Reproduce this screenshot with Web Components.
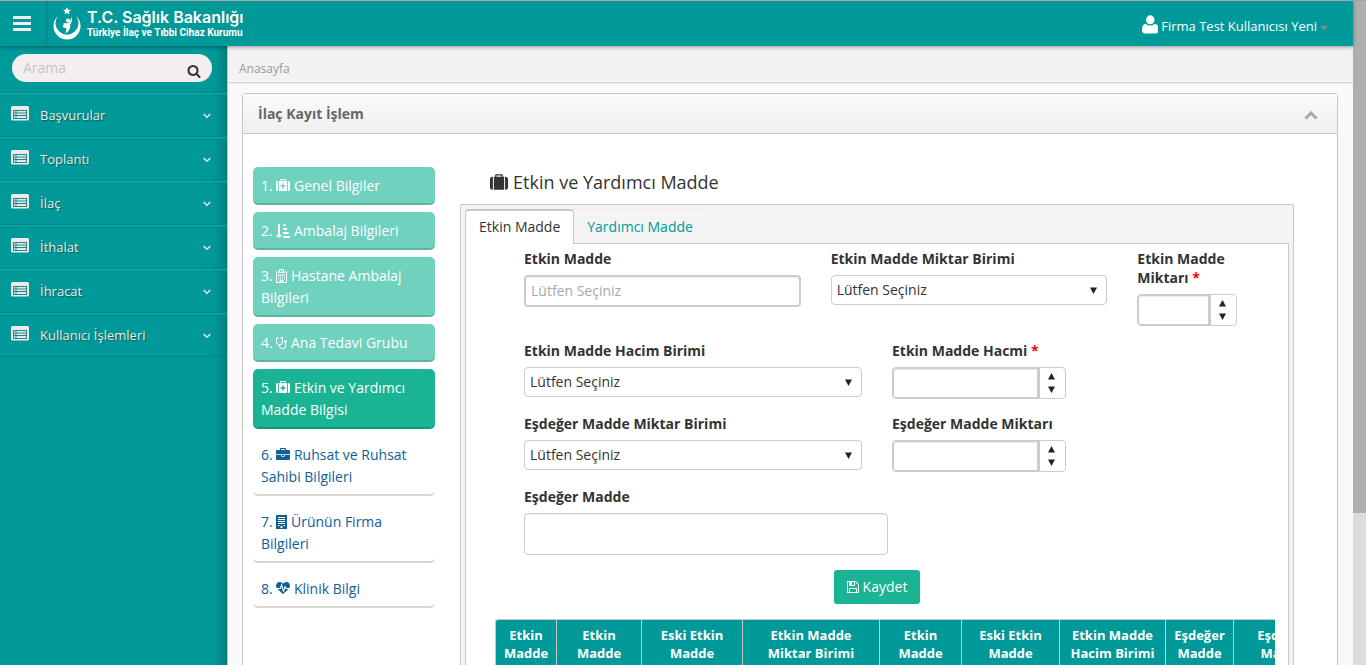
<!DOCTYPE html>
<html lang="tr">
<head>
<meta charset="utf-8">
<title>İlaç Kayıt İşlem</title>
<style>
html, body { margin: 0; height: 100%; overflow: hidden; }
body { font: 14px/22px "Open Sans", sans-serif; color: #333; background: #f9f9f9; }
</style>
</head>
<body>
<app-shell>
  <app-header slot="header"></app-header>
  <app-sidebar slot="side">
    <side-item>Başvurular</side-item>
    <side-item>Toplantı</side-item>
    <side-item>İlaç</side-item>
    <side-item>İthalat</side-item>
    <side-item>İhracat</side-item>
    <side-item>Kullanıcı İşlemleri</side-item>
  </app-sidebar>
  <bread-crumb>Anasayfa</bread-crumb>
  <panel-box>
    <span slot="title">İlaç Kayıt İşlem</span>
    <step-list slot="steps">
      <wizard-step state="done" no="1" icon="medkit">Genel Bilgiler</wizard-step>
      <wizard-step state="done" no="2" icon="sort">Ambalaj Bilgileri</wizard-step>
      <wizard-step state="done" no="3" icon="hospital">Hastane Ambalaj Bilgileri</wizard-step>
      <wizard-step state="done" no="4" icon="stethoscope">Ana Tedavi Grubu</wizard-step>
      <wizard-step state="active" no="5" icon="medkit">Etkin ve Yardımcı Madde Bilgisi</wizard-step>
      <wizard-step no="6" icon="briefcase">Ruhsat ve Ruhsat Sahibi Bilgileri</wizard-step>
      <wizard-step no="7" icon="building">Ürünün Firma Bilgileri</wizard-step>
      <wizard-step no="8" icon="heartbeat">Klinik Bilgi</wizard-step>
    </step-list>
    <section-title>Etkin ve Yardımcı Madde</section-title>
    <tab-box>
      <form-grid>
        <form-field style="grid-column: span 5" type="text" label="Etkin Madde" placeholder="Lütfen Seçiniz"></form-field>
        <form-field style="grid-column: span 5" type="select" label="Etkin Madde Miktar Birimi"></form-field>
        <form-field style="grid-column: span 2" type="number" label="Etkin Madde Miktarı" required></form-field>
        <form-field style="grid-column: span 6" type="select" label="Etkin Madde Hacim Birimi"></form-field>
        <form-field style="grid-column: span 6" type="number" label="Etkin Madde Hacmi" required size="wide"></form-field>
        <form-field style="grid-column: span 6" type="select" label="Eşdeğer Madde Miktar Birimi"></form-field>
        <form-field style="grid-column: span 6" type="number" label="Eşdeğer Madde Miktarı" size="wide"></form-field>
        <form-field style="grid-column: span 12" type="area" label="Eşdeğer Madde"></form-field>
        <save-button style="grid-column: span 12">Kaydet</save-button>
      </form-grid>
      <data-grid></data-grid>
    </tab-box>
  </panel-box>
</app-shell>

<script>
const ICONS = {
  medkit: [0, 1792, "M800 576h192v224h224v192h-224v224h-192v-224h-224v-192h224zM640 256h512v-128h-512zM272 256v1280h-48q-92 0-158-66t-66-158v-832q0-92 66-158t158-66zM1408 256v1280h-1024v-1280h128v-160q0-40 28-68t68-28h576q40 0 68 28t28 68v160zM1792 480v832q0 92-66 158t-158 66h-48v-1280h48q92 0 158 66t66 158z"],
  suitcase: [0, 1792, "M640 384h512v-128h-512zM288 384v1280h-64q-92 0-158-66t-66-158v-832q0-92 66-158t158-66zM1408 384v1280h-1024v-1280h128v-160q0-40 28-68t68-28h576q40 0 68 28t28 68v160zM1792 608v832q0 92-66 158t-158 66h-64v-1280h64q92 0 158 66t66 158z"],
  sort: [0, 1792, "M736 1440q0 12-10 24l-319 319q-10 9-23 9-12 0-23-9l-320-320q-15-16-7-35 8-20 30-20h192v-1376q0-14 9-23t23-9h192q14 0 23 9t9 23v1376h192q14 0 23 9t9 23zM896 0h320v256h-320zM896 512h512v256h-512zM896 1024h704v256h-704zM896 1536h896v256h-896z"],
  hospital: [192, 1408, "M448 1216h128v128h-128zM448 960h128v128h-128zM704 960h128v128h-128zM960 960h128v128h-128zM1216 960h128v128h-128zM1216 1216h128v128h-128zM960 1216h128v128h-128zM704 1216h128v128h-128zM448 704h896v128h-896zM192 320h384v-256q0-64 64-64h512q64 0 64 64v256h384v1472h-1408zM320 448v1216h320v-224h512v224h320v-1216h-256v64h-640v-64zM704 128v256h128v-96h128v96h128v-256h-128v80h-128v-80z"],
  stethoscope: [192, 1408, "M1472 704q0-26-19-45t-45-19-45 19-19 45 19 45 45 19 45-19 19-45zm128 0q0 61-35.5 111t-92.5 70v395q0 159-131.5 271.5t-316.5 112.5-316.5-112.5-131.5-271.5v-132q-164-20-274-128t-110-252v-512q0-26 19-45t45-19q6 0 16 2 17-30 47-48t65-18q53 0 90.5 37.5t37.5 90.5-37.5 90.5-90.5 37.5q-33 0-64-18v402q0 106 94 181t226 75 226-75 94-181v-402q-31 18-64 18-53 0-90.5-37.5t-37.5-90.5 37.5-90.5 90.5-37.5q35 0 65 18t47 48q10-2 16-2 26 0 45 19t19 45v512q0 144-110 252t-274 128v132q0 106 94 181t226 75 226-75 94-181v-395q-57-20-92.5-70t-35.5-111q0-80 56-136t136-56 136 56 56 136z"],
  briefcase: [0, 1792, "M640 256h512v-128h-512v128zm1152 640v480q0 66-47 113t-113 47h-1472q-66 0-113-47t-47-113v-480h672v160q0 26 19 45t45 19h320q26 0 45-19t19-45v-160h672zm-768 0v128h-256v-128h256zm768-480v384h-1792v-384q0-66 47-113t113-47h352v-160q0-40 28-68t68-28h576q40 0 68 28t28 68v160h352q66 0 113 47t47 113z"],
  building: [192, 1408, "M192 0h1408v1792h-1408zM448 256v112h896v-112zM448 512v112h896v-112zM448 768v112h896v-112zM448 1024v112h896v-112zM448 1280v112h192v-112zM1152 1280v112h192v-112zM768 1408v256h256v-256z"],
  heartbeat: [0, 1792, "M1280 896h305q-5 6-10 10.500t-9 7.500l-3 4-623 600q-18 18-44 18t-44-18l-624-602q-5-2-21-20h369q22 0 39.500-13.500t22.500-34.500l70-281 190 667q6 20 23 33t39 13q21 0 38-13t23-33l146-485 56 112q18 35 57 35zm512-428q0 145-103 300h-369l-111-221q-8-17-25.500-27t-36.500-8q-45 5-56 46l-129 430-196-686q-6-20-23.500-33t-39.500-13-39 13.500-22 34.500l-116 464h-423q-103-155-103-300 0-220 127-344t351-124q62 0 126.500 21.500t120 58 95.500 68.500 76 68q36-36 76-68t95.500-68.500 120-58 126.500-21.500q224 0 351 124t127 344z"],
  save: [128, 1536, "M512 1536h768v-384h-768v384zm896 0h128v-896q0-14-10-38.500t-20-34.500l-281-281q-10-10-34-20t-39-10v416q0 40-28 68t-68 28h-576q-40 0-68-28t-28-68v-416h-128v1280h128v-416q0-40 28-68t68-28h832q40 0 68 28t28 68v416zm-384-928v-320q0-13-9.500-22.500t-22.500-9.500h-192q-13 0-22.500 9.500t-9.500 22.500v320q0 13 9.500 22.500t22.500 9.500h192q13 0 22.500-9.500t9.500-22.500zm640 32v928q0 40-28 68t-68 28h-1344q-40 0-68-28t-28-68v-1344q0-40 28-68t68-28h928q40 0 88 20t76 48l280 280q28 28 48 76t20 88z"],
  user: [192, 1408, "M1600 1399q0 109-62 187t-150 78h-984q-88 0-150-78t-62-187q0-85 8-160t32-152 58-131 94-89 134-35q131 158 378 158t378-158q76 0 134 35t94 89 58 131 32 152 8 160zM1260 500q0 159-106 272t-258 112-258-112-106-272 106-272 258-112 258 112 106 272z"],
  search: [0, 1792, "M1216 832q0-185-131.500-316.500t-316.500-131.500-316.500 131.500-131.500 316.500 131.500 316.500 316.500 131.500 316.500-131.500 131.500-316.500zm512 832q0 52-38 90t-90 38q-54 0-90-38l-343-342q-179 124-399 124-143 0-273.500-55.500t-225-150-150-225-55.500-273.500 55.500-273.500 150-225 225-150 273.500-55.500 273.500 55.500 225 150 150 225 55.500 273.500q0 220-124 399l343 343q37 37 37 90z"]
};

function define(name, html, setup) {
  const tpl = document.createElement("template");
  tpl.innerHTML = html;
  customElements.define(name, class extends HTMLElement {
    constructor() {
      super();
      this.attachShadow({ mode: "open" }).append(tpl.content.cloneNode(true));
    }
    connectedCallback() {
      if (setup && !this.ready) { this.ready = true; setup(this, this.shadowRoot); }
    }
  });
}

define("app-icon", `<style>
:host { display: inline-block; height: var(--icon, 14px); vertical-align: -2px; line-height: 0; }
svg { height: 100%; fill: currentColor; }
</style><svg aria-hidden="true"><path fill-rule="evenodd"/></svg>`, (el, root) => {
  const [x, w, d] = ICONS[el.getAttribute("name")];
  root.querySelector("svg").setAttribute("viewBox", `${x} 0 ${w} 1792`);
  root.querySelector("path").setAttribute("d", d);
});

define("app-shell", `<style>
:host { display: grid; grid-template: "head rail" 46px "body rail" 1fr / 1fr 13px; height: 100vh; overflow: hidden; }
slot[name=header] { display: block; grid-area: head; }
.body { grid-area: body; display: grid; grid-template-columns: 228px minmax(0, 1fr); min-height: 0; }
main { min-width: 0; overflow: hidden; background: #f9f9f9; }
.rail { grid-area: rail; background: #dcdcda; }
.thumb { height: 77%; background: #afafad; border-top: 1px solid #a6a6a6; }
</style>
<slot name="header"></slot>
<div class="body"><slot name="side"></slot><main><slot></slot></main></div>
<div class="rail"><div class="thumb"></div></div>`);

define("app-header", `<style>
:host { display: flex; align-items: stretch; box-sizing: border-box; height: 46px; background: #009999; border-top: 1px solid #a6a6a6; color: #fff; position: relative; z-index: 2; box-shadow: 0 1px 4px rgba(0,0,0,.4); }
.menu { width: 47px; padding: 0 15px 0 13px; background: none; border: 0; border-right: 1px solid #018282; display: flex; flex-direction: column; justify-content: center; gap: 3px; }
.menu i { height: 3px; background: #f0eeee; }
.brand { display: flex; align-items: center; gap: 6px; padding-left: 6px; flex: 1; color: #fff; text-decoration: none; }
.names { display: flex; flex-direction: column; font-family: Inter, sans-serif; }
.names b { font-size: 16px; line-height: 18px; font-weight: 600; }
.names span { font: 700 10px/14px Roboto, sans-serif; }
.user { display: flex; align-items: center; gap: 3px; padding: 0 25px 0 0; background: none; border: 0; color: #fff; font: 13px/20px "Open Sans", sans-serif; --icon: 21px; }
.user app-icon { align-self: flex-start; padding-top: 13px; }
.user span { padding-top: 4px; }
.caret { border: 4px solid transparent; border-top-color: #8c8580; border-bottom: 0; margin-top: 8px; }
</style>
<button class="menu" aria-label="Menü"><i></i><i></i><i></i></button>
<a class="brand" href="#">
<svg width="28" height="34" viewBox="0 0 28 34" fill="#fff" aria-hidden="true">
<path d="M5 9A13.500 13.500 0 1 0 23 9A11.500 11.500 0 1 1 5 9Z"/>
<path d="M14 0l1.100 2.700 2.900.1-2.200 1.900.7 2.900-2.500-1.600-2.500 1.600.7-2.900L10 2.800l2.900-.1z"/>
<circle cx="15" cy="13.500" r="2"/>
<path d="M18.500 10q1.500 4-1.200 7 .4 4-1.800 7-1.200 1.500-3 2 .5-3 1-4.500-2-1-4-1.500 1.500-2 1-4 2.500.5 5 0Q18 14 18.500 10z"/>
</svg>
<span class="names"><b>T.C. Sağlık Bakanlığı</b><span>Türkiye İlaç ve Tıbbi Cihaz Kurumu</span></span></a>
<button class="user"><app-icon name="user"></app-icon><span>Firma Test Kullanıcısı Yeni</span><i class="caret"></i></button>`);

define("app-sidebar", `<style>
:host { display: block; background: #009999; box-sizing: border-box; border-right: 1px solid #bfc6c6; box-shadow: inset -14px 0 12px -10px rgba(0,50,50,.35); }
.search { display: flex; align-items: center; height: 28px; margin: 8px 15px 10px 12px; padding: 0 11px; border-radius: 14px; background: #f3efee; color: #333; }
input { flex: 1; min-width: 0; border: 0; padding: 0; background: none; outline: 0; font: 14px/20px "Open Sans", sans-serif; }
input::placeholder { color: #c4c4c8; opacity: 1; }
button { border: 0; background: none; padding: 6px 0 0; color: #333; line-height: 0; }
nav { border-top: 1px solid #018484; }
</style>
<div class="search"><input aria-label="Arama" placeholder="Arama"><button aria-label="Ara"><app-icon name="search"></app-icon></button></div>
<nav><slot></slot></nav>`);

define("side-item", `<style>
:host { display: block; border-top: 1px solid #1aa8a6; border-bottom: 1px solid #018484; }
a { display: flex; align-items: center; gap: 11px; height: 42px; padding: 0 16px 0 11px; color: #eee9e8; text-decoration: none; font-size: 13px; text-shadow: 1px 1px 1px rgba(0,0,0,.4); }
span { flex: 1; }
.list { margin-bottom: 3px; }
.more { margin-top: 2px; }
</style><a href="#"><svg class="list" width="18" height="15" viewBox="0 0 18 15" aria-hidden="true"><rect width="18" height="14.500" rx="1.500" fill="#eeeae9"/><rect x="2" y="4" width="14" height="9" fill="#2a8686"/><path d="M3 5h1.500v1.500H3zM5.500 5H15v1.500H5.500zM3 7.500h1.500V9H3zM5.500 7.500H15V9H5.500zM3 10h1.500v2H3zM5.500 10H15v2H5.500z" fill="#dceceb"/></svg><span><slot></slot></span><svg class="more" width="8" height="6" viewBox="0 0 8 6" fill="none" stroke="#e4e8e6" stroke-width="1.500" aria-hidden="true"><path d="M.7 1l3.300 3.200L7.300 1"/></svg></a>`);

define("bread-crumb", `<style>
:host { display: block; height: 36px; box-sizing: border-box; padding: 13px 11px 0; background: #f2f2f2; border-bottom: 1px solid #fff; box-shadow: 0 1px 1px #d0d0d0; }
a { color: #999; font-size: 12px; line-height: 20px; text-decoration: none; display: block; }
</style><a href="#"><slot></slot></a>`);

define("panel-box", `<style>
:host { display: block; margin: 11px 15px 0 14px; border: 1px solid #c6c6c6; border-radius: 3px 3px 0 0; background: #fff; }
header { display: flex; justify-content: space-between; align-items: center; height: 39px; padding: 0 19px 0 15px; border-bottom: 1px solid #c6c6c6; background: linear-gradient(#fafafa, #f0f0f0); }
h1 { margin: 0; font-size: 14px; font-weight: 700; color: #666; }
header button { border: 0; padding: 3px 0 0; background: none; line-height: 0; }
.cols { display: grid; grid-template-columns: 182px minmax(0, 1fr); column-gap: 25px; padding: 33px 43px 0 10px; }
</style>
<header><h1><slot name="title"></slot></h1><button aria-label="Daralt"><svg width="14" height="9" viewBox="0 0 14 9" fill="none" stroke="#aaa" stroke-width="3"><path d="M1.500 7.500L7 2l5.500 5.500"/></svg></button></header>
<div class="cols"><slot name="steps"></slot><section><slot></slot></section></div>`);

define("step-list", `<style>:host { display: flex; flex-direction: column; gap: 7px; padding-bottom: 80px; }</style><slot></slot>`);

define("wizard-step", `<style>
:host { display: block; }
a { display: block; padding: 8px 8px 6px; border-radius: 5px; border-bottom: 2px solid #d6d6d6; color: #0e6193; text-decoration: none; line-height: 22px; }
:host([state=done]) a { background: #70d1be; border-color: #5fb1a1; color: #fff; }
:host([state=active]) a { background: #1ab394; border-color: #16987e; color: #fff; }
</style><a href="#"></a>`, (el, root) => {
  root.querySelector("a").innerHTML = `${el.getAttribute("no")}. <app-icon name="${el.getAttribute("icon")}"></app-icon> <slot></slot>`;
});

define("section-title", `<style>
:host { display: block; margin-bottom: 7px; padding-left: 30px; --icon: 18px; }
h2 { margin: 0; font-size: 18px; line-height: 30px; font-weight: 400; display: flex; gap: 5px; align-items: center; color: #333; }
</style><h2><app-icon name="suitcase"></app-icon><slot></slot></h2>`);

define("tab-box", `<style>
:host { display: block; padding: 4px; border: 1px solid #c8c8c8; background: #f4f4f4; }
.tabs { display: flex; }
button { font: 14px/22px "Open Sans", sans-serif; border: 0; border-top: 1px solid #e8e8e8; background: none; color: #009999; height: 34px; padding: 0 11px 0 13px; }
.on { color: #333; background: #fff; border: 1px solid #c8c8c8; border-top-width: 2px; border-bottom: 0; border-radius: 4px 4px 0 0; height: 35px; padding: 0 13px 2px; margin-bottom: -1px; position: relative; z-index: 1; }
.panel { border: 1px solid #c8c8c8; background: #fff; }
</style>
<div class="tabs" role="tablist"><button class="on" role="tab" aria-selected="true">Etkin Madde</button><button role="tab" aria-selected="false">Yardımcı Madde</button></div>
<div class="panel" role="tabpanel"><slot></slot></div>`);

define("form-grid", `<style>
form { display: grid; grid-template-columns: repeat(12, minmax(0, 1fr)); row-gap: 15px; align-items: start; padding: 5px 43px 15px; }
:host { display: block; }
</style><form><slot></slot></form>`);

define("form-field", `<style>
:host { display: block; padding: 0 15px; }
label { display: block; margin-bottom: 7px; font-weight: 700; line-height: 19px; color: #333; }
em { font-style: normal; color: #f00; }
input, select, textarea { font: 14px/20px "Open Sans", sans-serif; box-sizing: border-box; border: 1px solid #ccc; border-radius: 4px; background: #fff; color: #333; outline: 0; display: block; width: 100%; margin: 0; }
input { height: 32px; border-width: 2px; padding: 0 5px 2px; box-shadow: inset 0 1px 1px rgba(0,0,0,.08); }
input::placeholder { color: #a8a8a8; opacity: 1; }
.pick, .num { display: grid; grid-template-columns: 1fr; align-items: center; }
.pick > * { grid-area: 1 / 1; }
select { height: 30px; padding: 0 5px; appearance: none; }
.arrow { justify-self: end; margin-right: 10px; pointer-events: none; }
textarea { width: 364px; max-width: 100%; height: 42px; resize: none; box-shadow: inset 0 1px 1px rgba(0,0,0,.08); }
.num { box-sizing: border-box; width: 100px; height: 32px; grid-template-columns: 1fr 26px; border: 1px solid #ccc; border-radius: 4px; }
:host([size=wide]) .num { width: 174px; }
.num input { height: 30px; border-width: 1px 2px 1px 1px; border-radius: 3px 0 0 3px; }
.spin { display: flex; flex-direction: column; align-items: center; height: 30px; justify-content: center; border-left: 1px solid #ccc; padding-right: 2px; box-sizing: border-box; }
.spin button { border: 0; background: none; padding: 3px; line-height: 0; }
</style><label for="c"></label>`, (el, root) => {
  const a = n => el.getAttribute(n) || "";
  root.querySelector("label").innerHTML = a("label") + (el.hasAttribute("required") ? " <em>*</em>" : "");
  const down = c => `<svg class="${c}" width="7" height="7" viewBox="0 0 7 7" fill="#222" aria-hidden="true"><path d="M0 .5h7L3.500 7z"/></svg>`;
  const kinds = {
    text: `<input id="c" placeholder="${a("placeholder")}">`,
    select: `<div class="pick"><select id="c"><option>Lütfen Seçiniz</option></select>${down("arrow")}</div>`,
    number: `<div class="num"><input id="c" inputmode="decimal"><div class="spin"><button type="button" aria-label="Artır"><svg width="7" height="7" viewBox="0 0 7 7" fill="#222"><path d="M0 6.500h7L3.500 0z"/></svg></button><button type="button" aria-label="Azalt">${down("")}</button></div></div>`,
    area: `<textarea id="c"></textarea>`
  };
  root.querySelector("label").insertAdjacentHTML("afterend", kinds[a("type")]);
});

define("save-button", `<style>
:host { display: flex; justify-content: center; }
button { font: 14px/22px "Open Sans", sans-serif; height: 34px; padding: 0 13px; border: 0; border-radius: 3px; background: #1ab394; color: #fff; display: flex; align-items: center; gap: 4px; }
</style><button type="button"><app-icon name="save"></app-icon><slot></slot></button>`);

define("data-grid", `<style>
:host { display: block; margin: 0 13px 0 29px; overflow: hidden; border-left: 1px solid #c8c8c8; border-top: 1px solid #c8c8c8; border-radius: 3px 0 0 0; }
table { border-collapse: separate; border-spacing: 0; table-layout: fixed; width: 836px; }
th { box-sizing: border-box; padding: 6px 4px 30px; font-size: 13px; line-height: 18px; font-weight: 700; color: #fff; background: #009999; border-right: 1px solid #c8c8c8; }
</style><table><colgroup></colgroup><thead><tr></tr></thead></table>`, (el, root) => {
  const cols = [["Etkin Madde", 61], ["Etkin<br>Madde", 85], ["Eski Etkin<br>Madde", 101], ["Etkin Madde Miktar Birimi", 137], ["Etkin<br>Madde", 82], ["Eski Etkin<br>Madde", 98], ["Etkin Madde Hacim Birimi", 106], ["Eşdeğer Madde", 68], ["Eşdeğer<br>Madde", 98]];
  root.querySelector("colgroup").innerHTML = cols.map(c => `<col style="width:${c[1]}px">`).join("");
  root.querySelector("tr").innerHTML = cols.map(c => `<th scope="col">${c[0]}</th>`).join("");
});
</script>
</body>
</html>
